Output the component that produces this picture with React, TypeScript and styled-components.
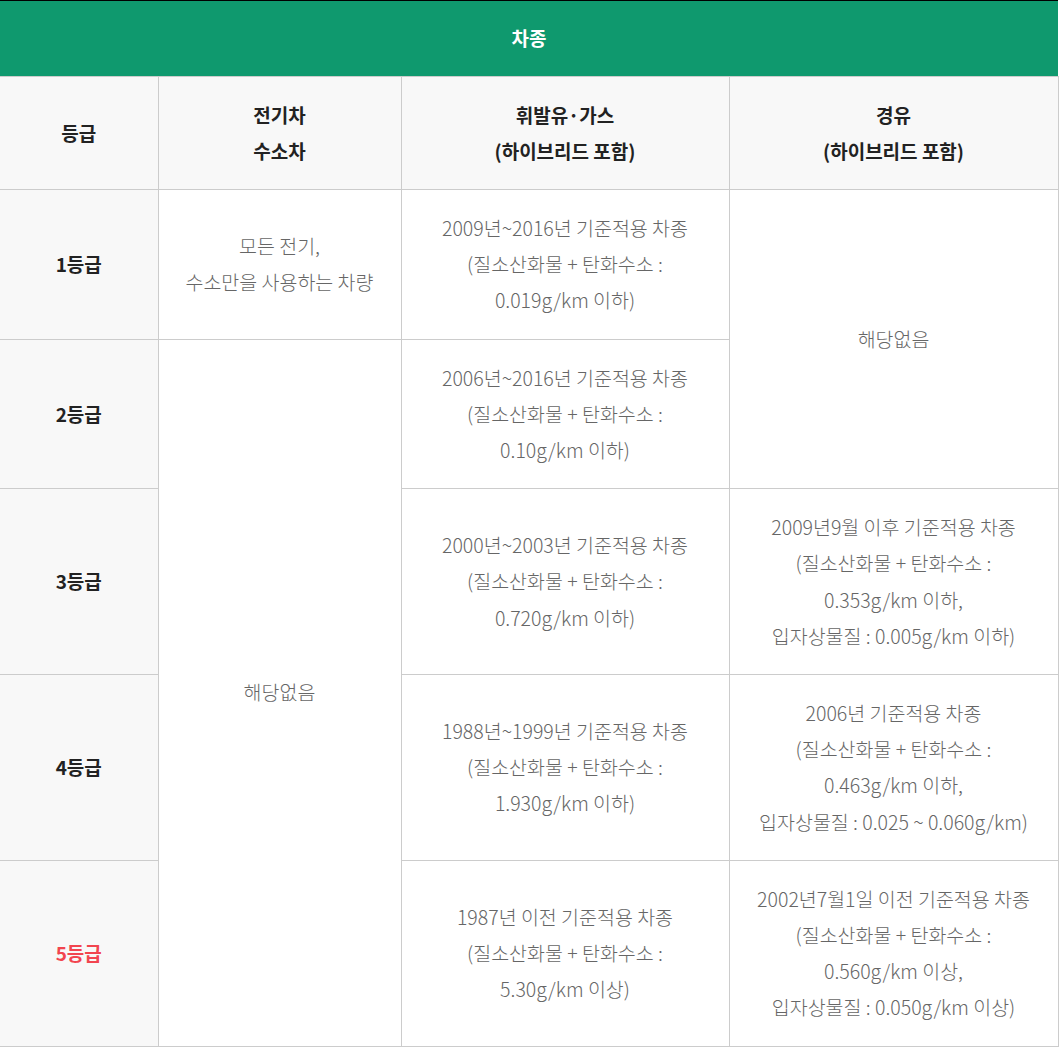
import React from "react";
import styled, { createGlobalStyle } from "styled-components";

const GlobalStyle = createGlobalStyle`
  html, body { margin: 0; padding: 0; background: #fff; }
  body { font-family: "Noto Sans CJK KR", "Noto Sans", sans-serif; }
`;

const Table = styled.table`
  width: 1058px;
  border-collapse: collapse;
  table-layout: fixed;
  border-top: 1px solid #000;
  font-family: "Noto Sans CJK KR", "Noto Sans", sans-serif;
  font-size: 19px;
  line-height: 36.2px;
`;

const TitleCell = styled.th`
  background: #0f996e;
  color: #fff;
  font-weight: 700;
  padding: 19px 0;
  line-height: 36.5px;
  text-align: center;
  border-bottom: 1px solid #cccccc;
`;

const HeadCell = styled.th<{ $first?: boolean }>`
  background: #f8f8f8;
  color: #222;
  font-weight: 700;
  padding: 20px 0;
  text-align: center;
  vertical-align: middle;
  border: 1px solid #cccccc;
  border-left: ${(p) => (p.$first ? "none" : "1px solid #cccccc")};
`;

const GradeCell = styled.th<{ $red?: boolean }>`
  background: #f8f8f8;
  color: ${(p) => (p.$red ? "#f2454f" : "#222")};
  font-weight: 700;
  padding: 20px 0;
  text-align: center;
  vertical-align: middle;
  border: 1px solid #cccccc;
  border-left: none;
`;

const DataCell = styled.td`
  color: #666;
  font-weight: 300;
  font-size: 19.5px;
  padding: 20px 0;
  text-align: center;
  vertical-align: middle;
  border: 1px solid #cccccc;
  background: #fff;
`;

type Row = {
  grade: string;
  red?: boolean;
  ev?: { text: string[]; span: number };
  gas: string[];
  diesel?: { text: string[]; span: number };
};

const rows: Row[] = [
  {
    grade: "1등급",
    ev: { text: ["모든 전기,", "수소만을 사용하는 차량"], span: 1 },
    gas: ["2009년~2016년 기준적용 차종", "(질소산화물 + 탄화수소 :", "0.019g/km 이하)"],
    diesel: { text: ["해당없음"], span: 2 },
  },
  {
    grade: "2등급",
    ev: { text: ["해당없음"], span: 4 },
    gas: ["2006년~2016년 기준적용 차종", "(질소산화물 + 탄화수소 :", "0.10g/km 이하)"],
  },
  {
    grade: "3등급",
    gas: ["2000년~2003년 기준적용 차종", "(질소산화물 + 탄화수소 :", "0.720g/km 이하)"],
    diesel: {
      text: ["2009년9월 이후 기준적용 차종", "(질소산화물 + 탄화수소 :", "0.353g/km 이하,", "입자상물질 : 0.005g/km 이하)"],
      span: 1,
    },
  },
  {
    grade: "4등급",
    gas: ["1988년~1999년 기준적용 차종", "(질소산화물 + 탄화수소 :", "1.930g/km 이하)"],
    diesel: {
      text: ["2006년 기준적용 차종", "(질소산화물 + 탄화수소 :", "0.463g/km 이하,", "입자상물질 : 0.025 ~ 0.060g/km)"],
      span: 1,
    },
  },
  {
    grade: "5등급",
    red: true,
    gas: ["1987년 이전 기준적용 차종", "(질소산화물 + 탄화수소 :", "5.30g/km 이상)"],
    diesel: {
      text: ["2002년7월1일 이전 기준적용 차종", "(질소산화물 + 탄화수소 :", "0.560g/km 이상,", "입자상물질 : 0.050g/km 이상)"],
      span: 1,
    },
  },
];

const Lines = ({ lines }: { lines: string[] }) => (
  <>
    {lines.map((l, i) => (
      <React.Fragment key={i}>
        {i > 0 && <br />}
        {l}
      </React.Fragment>
    ))}
  </>
);

export default function App() {
  return (
    <>
      <GlobalStyle />
      <Table>
        <colgroup>
          <col style={{ width: 158 }} />
          <col style={{ width: 243 }} />
          <col style={{ width: 328 }} />
          <col style={{ width: 329 }} />
        </colgroup>
        <thead>
          <tr>
            <TitleCell colSpan={4}>차종</TitleCell>
          </tr>
          <tr>
            <HeadCell $first>등급</HeadCell>
            <HeadCell>
              <Lines lines={["전기차", "수소차"]} />
            </HeadCell>
            <HeadCell>
              <Lines lines={["휘발유·가스", "(하이브리드 포함)"]} />
            </HeadCell>
            <HeadCell>
              <Lines lines={["경유", "(하이브리드 포함)"]} />
            </HeadCell>
          </tr>
        </thead>
        <tbody>
          {rows.map((r) => (
            <tr key={r.grade}>
              <GradeCell $red={r.red}>{r.grade}</GradeCell>
              {r.ev && (
                <DataCell rowSpan={r.ev.span}>
                  <Lines lines={r.ev.text} />
                </DataCell>
              )}
              <DataCell>
                <Lines lines={r.gas} />
              </DataCell>
              {r.diesel && (
                <DataCell rowSpan={r.diesel.span}>
                  <Lines lines={r.diesel.text} />
                </DataCell>
              )}
            </tr>
          ))}
        </tbody>
      </Table>
    </>
  );
}
